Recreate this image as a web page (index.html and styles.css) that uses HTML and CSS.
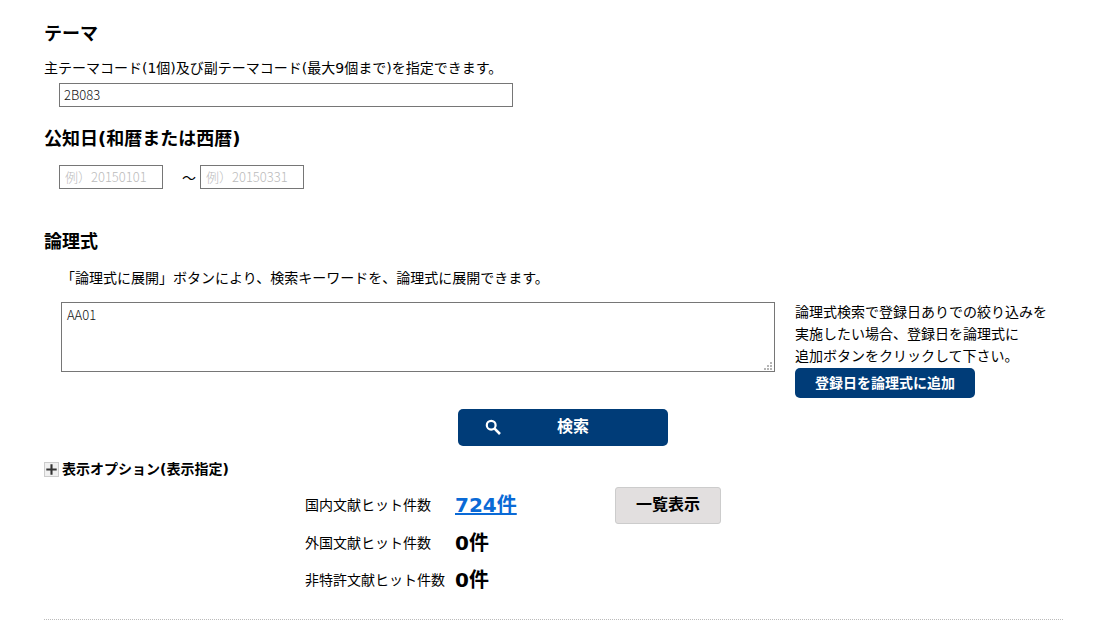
FILE: index.html
```html
<!DOCTYPE html>
<html lang="ja">
<head>
<meta charset="utf-8">
<title>検索</title>
<link rel="stylesheet" href="styles.css">
</head>
<body>
<main class="page">
  <section class="theme">
    <h2 class="heading">テーマ</h2>
    <p class="note">主テーマコード(1個)及び副テーマコード(最大9個まで)を指定できます。</p>
    <input class="field field-theme" type="text" value="2B083">
  </section>
  <section class="date">
    <h2 class="heading">公知日(和暦または西暦)</h2>
    <div class="date-row">
      <input class="field field-date" type="text" placeholder="例）20150101">
      <span class="tilde">～</span>
      <input class="field field-date" type="text" placeholder="例）20150331">
    </div>
  </section>
  <section class="logic">
    <h2 class="heading">論理式</h2>
    <p class="note note-logic">「論理式に展開」ボタンにより、検索キーワードを、論理式に展開できます。</p>
    <div class="logic-row">
      <div class="area-wrap">
        <textarea class="area">AA01</textarea>
        <svg class="grip" viewBox="0 0 9 9" width="9" height="9" aria-hidden="true">
          <path d="M6 0h2v2H6zM3 3h2v2H3zM6 3h2v2H6zM0 6h2v2H0zM3 6h2v2H3zM6 6h2v2H6z" fill="#b5b5b5"/>
        </svg>
      </div>
      <div class="side">
        <p class="side-text">論理式検索で登録日ありでの絞り込みを<br>実施したい場合、登録日を論理式に<br>追加ボタンをクリックして下さい。</p>
        <button class="btn-add" type="button">登録日を論理式に追加</button>
      </div>
    </div>
  </section>
  <div class="search-row">
    <button class="btn-search" type="button">
      <svg class="search-icon" viewBox="0 0 16 16" width="16" height="16" aria-hidden="true">
        <circle cx="6.2" cy="6.2" r="4.4" fill="none" stroke="#fff" stroke-width="2.2"/>
        <path d="M9.600 9.600 L15 15" stroke="#fff" stroke-width="2.6" fill="none"/>
      </svg>
      <span class="search-label">検索</span>
    </button>
  </div>
  <div class="options">
    <span class="plus"><svg viewBox="0 0 15 15" width="13" height="13" aria-hidden="true"><path d="M7.5 1.500v12M1.500 7.500h12" stroke="#333" stroke-width="2.4"/></svg></span>
    <span class="options-label">表示オプション(表示指定)</span>
  </div>
  <div class="results">
    <span class="r-label r-first">国内文献ヒット件数</span>
    <a class="r-value r-link r-first" href="#">724件</a>
    <button class="btn-list" type="button"><span class="btn-list-label">一覧表示</span></button>
    <span class="r-label">外国文献ヒット件数</span>
    <span class="r-value">0件</span>
    <span></span>
    <span class="r-label">非特許文献ヒット件数</span>
    <span class="r-value">0件</span>
    <span></span>
  </div>
  <hr class="rule">
</main>
</body>
</html>
```
FILE: styles.css
```css
* { box-sizing: border-box; }
html, body { margin: 0; padding: 0; background: #fff; }
body {
  color: #000;
  font-family: "DejaVu Sans", "Noto Sans CJK JP", sans-serif;
  font-size: 14px;
  overflow: hidden;
}
.page { width: 1099px; height: 633px; padding: 22px 36px 0 44px; }
.heading { margin: 0; font-size: 18px; font-weight: 700; line-height: 24px; }
.note { margin: 0; font-size: 14px; line-height: 20px; }
.theme .note { margin-top: 12px; }
.field {
  display: block;
  height: 24px;
  margin: 0;
  padding: 0 4px 2px;
  border: 1px solid #767676;
  border-radius: 0;
  background: #fff;
  color: #111;
  font-family: "Noto Sans CJK JP", sans-serif;
  font-weight: 300;
  font-size: 13px;
  outline: none;
}
.field::placeholder { color: #bbb; opacity: 1; }
.field-theme { width: 454px; margin-left: 15px; margin-top: 5px; }
.date { margin-top: 20px; }
.date-row { display: flex; align-items: center; margin: 14px 0 0 15px; }
.field-date { width: 104px; padding-left: 5px; }
.tilde { width: 37px; text-align: right; padding-right: 4px; font-size: 14px; }
.logic { margin-top: 41px; }
.note-logic { margin: 14px 0 0 17px; white-space: nowrap; }
.logic-row { display: flex; margin: 14px 0 0 17px; }
.area-wrap { position: relative; width: 714px; height: 70px; }
.area {
  display: block;
  width: 714px;
  height: 70px;
  margin: 0;
  padding: 3px 5px;
  border: 1px solid #767676;
  border-radius: 0;
  color: #111;
  font-family: "Noto Sans CJK JP", sans-serif;
  font-weight: 300;
  font-size: 13px;
  line-height: 18px;
  outline: none;
  resize: none;
}
.grip { position: absolute; right: 2px; bottom: 1px; }
.side { margin: -1px 0 0 20px; width: 270px; }
.side-text { margin: 0; font-size: 14px; line-height: 22px; white-space: nowrap; }
.btn-add {
  display: block;
  width: 180px;
  height: 30px;
  margin: 1px 0 0;
  padding: 0 0 2px;
  border: 0;
  border-radius: 5px;
  background: #003c78;
  color: #fff;
  font: 700 14px "DejaVu Sans", "Noto Sans CJK JP", sans-serif;
}
.search-row { display: flex; margin: 11px 0 0 414px; }
.btn-search {
  display: flex;
  align-items: center;
  width: 210px;
  height: 37px;
  padding: 0 0 0 27px;
  border: 0;
  border-radius: 5px;
  background: #003c78;
  color: #fff;
  font: 700 16px "DejaVu Sans", "Noto Sans CJK JP", sans-serif;
}
.search-icon { flex: none; margin-bottom: 2px; }
.search-label { margin-left: 56px; padding-bottom: 5px; }
.options { display: flex; align-items: center; gap: 3px; margin-top: 16px; height: 15px; }
.plus {
  display: flex;
  align-items: center;
  justify-content: center;
  width: 15px;
  height: 15px;
  border: 1px solid #ccc;
  background: #f0f0f0;
}
.options-label { font-size: 14px; font-weight: 700; white-space: nowrap; padding-bottom: 3px; }
.results {
  display: grid;
  grid-template-columns: 150px 160px 106px;
  grid-auto-rows: 37px;
  align-items: center;
  margin: 10px 0 0 261px;
}
.r-label { font-size: 14px; white-space: nowrap; padding-bottom: 2px; }
.r-value { font-size: 20px; font-weight: 700; white-space: nowrap; padding-bottom: 2px; }
.r-first { padding-bottom: 4px; }
.r-link { color: #0a6ad6; text-decoration: underline; justify-self: start; }
.btn-list {
  width: 106px;
  height: 37px;
  padding: 0 0 5px;
  border: 1px solid #ccc;
  border-radius: 3px;
  background: #e2dfdf;
  color: #000;
  font: 700 16px "DejaVu Sans", "Noto Sans CJK JP", sans-serif;
}
.rule { width: 1019px; margin: 21px 0 0; border: 0; border-top: 1px dotted #bbb; }
```
